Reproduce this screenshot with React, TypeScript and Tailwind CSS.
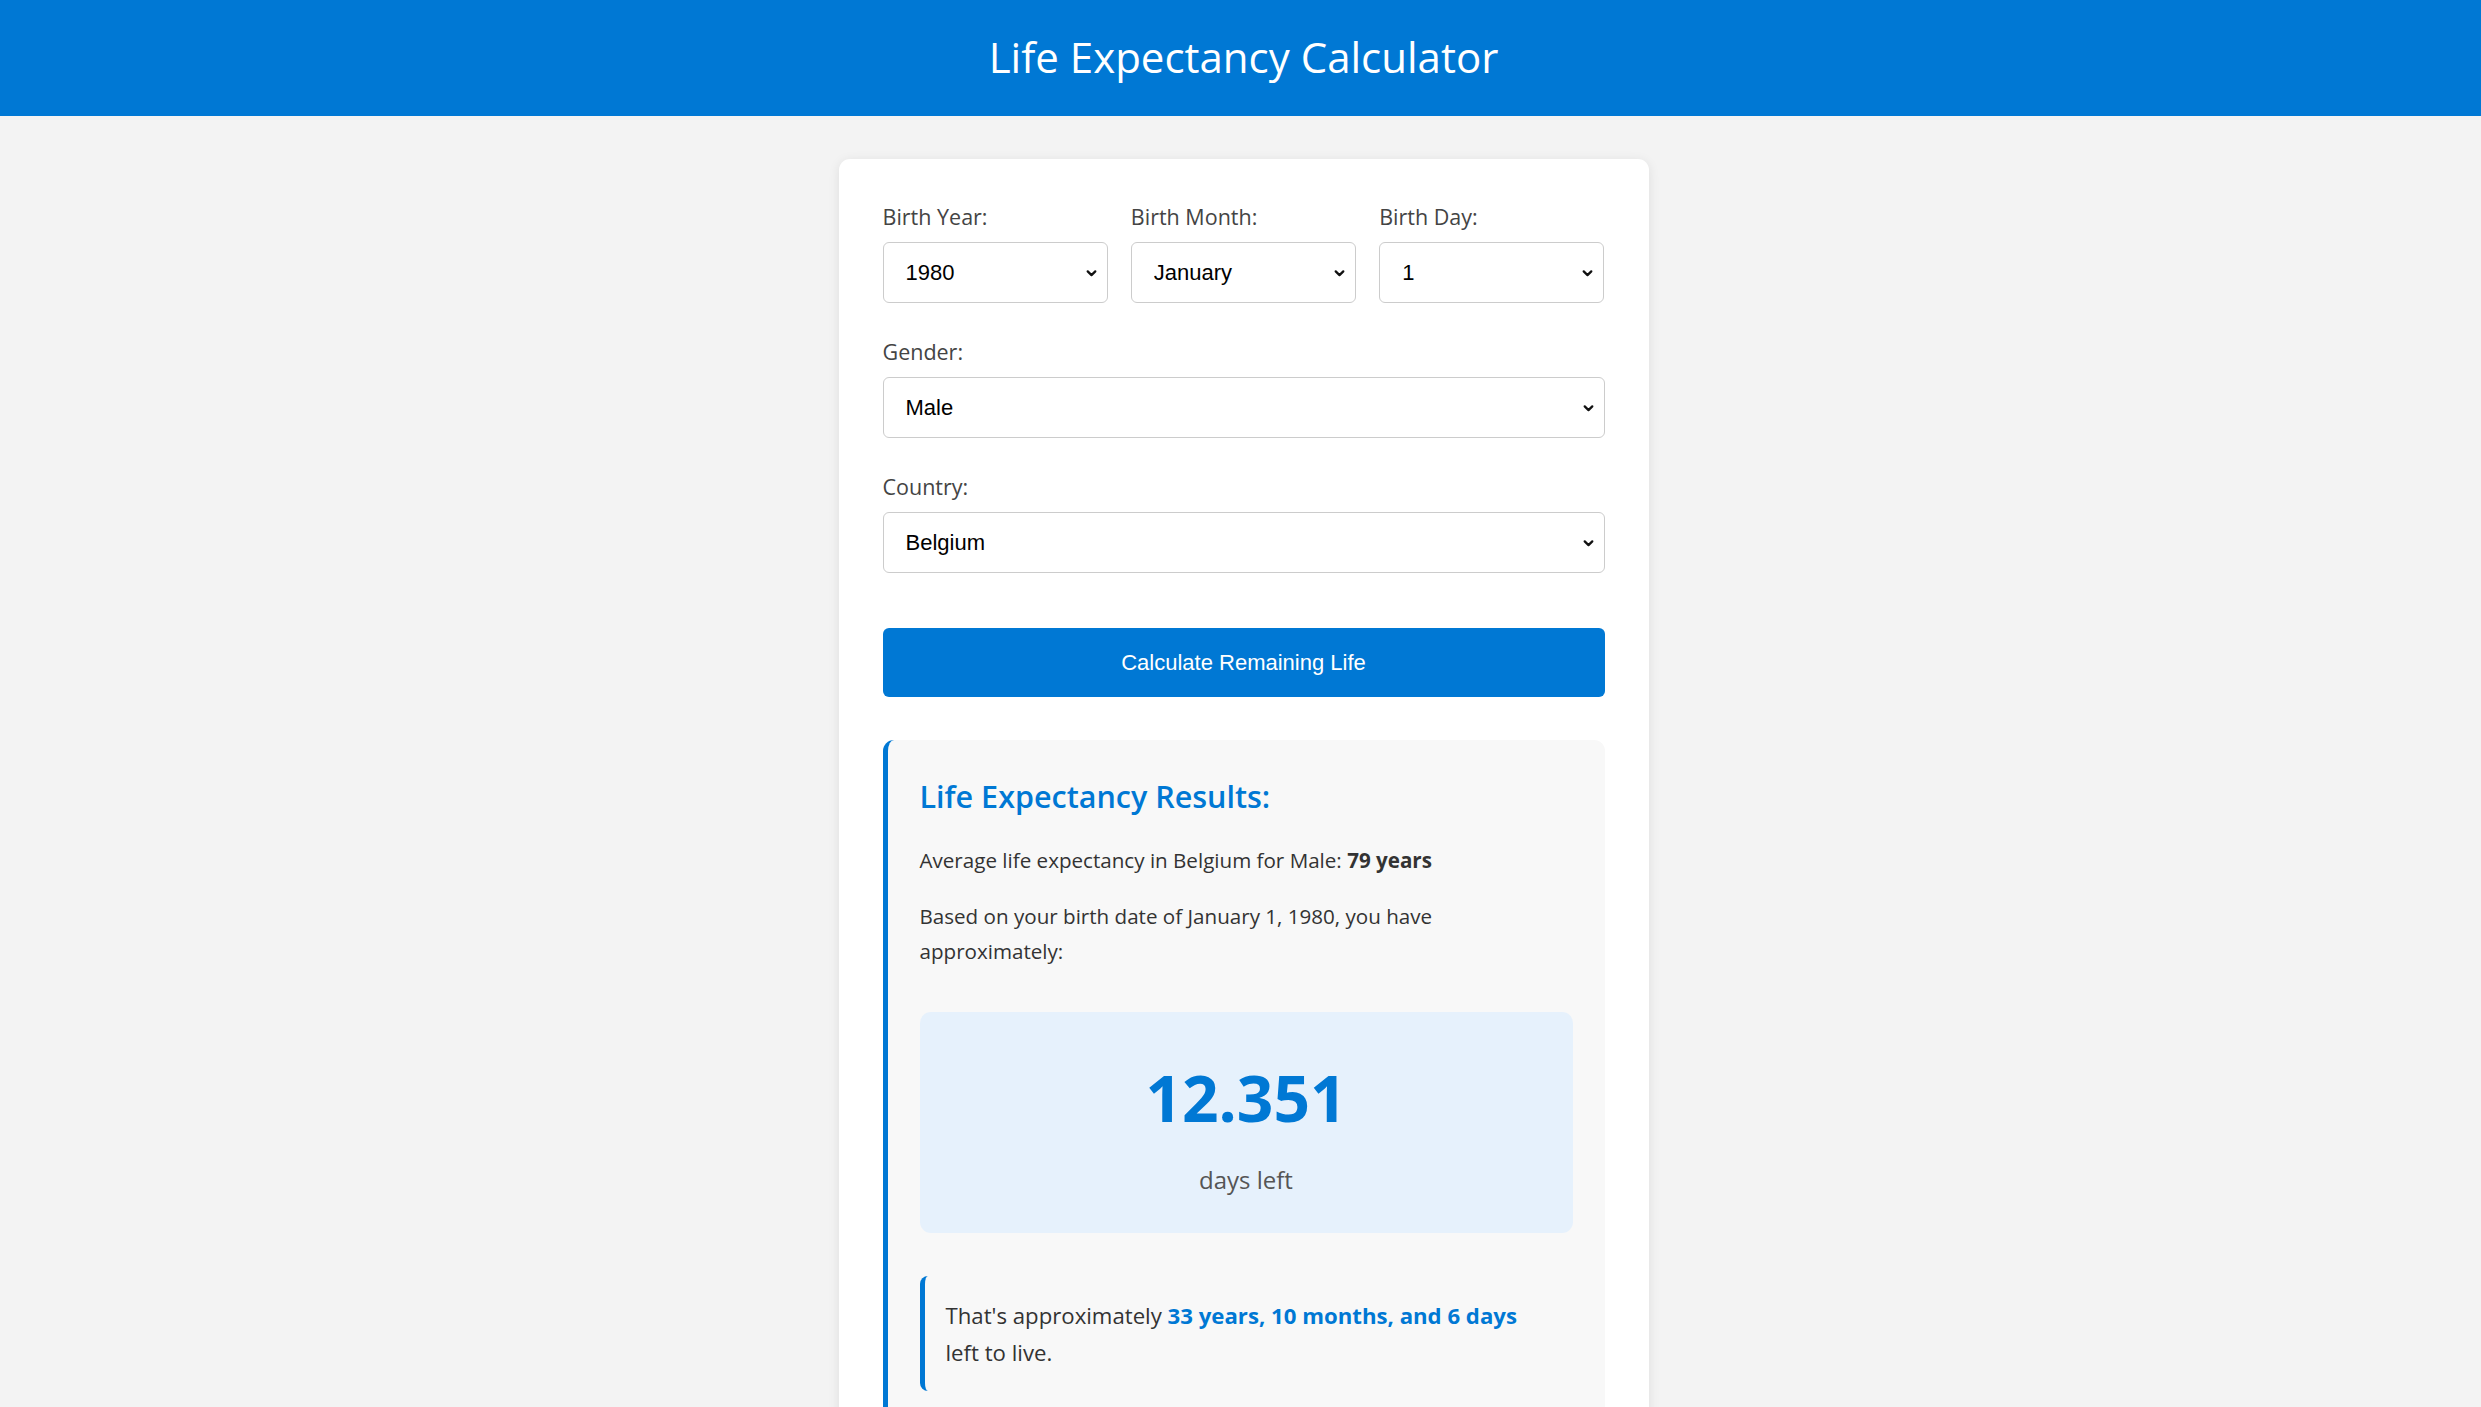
import { useState } from 'react';

const YEARS = Array.from({ length: 100 }, (_, i) => 2024 - i);
const MONTHS = [
  'January', 'February', 'March', 'April', 'May', 'June',
  'July', 'August', 'September', 'October', 'November', 'December',
];
const DAYS = Array.from({ length: 31 }, (_, i) => i + 1);

function Chevron() {
  return (
    <svg
      className="pointer-events-none absolute right-[10px] top-1/2 -translate-y-1/2 w-[13px] h-[13px]"
      viewBox="0 0 12 12"
      fill="none"
      stroke="#111"
      strokeWidth={2.1}
    >
      <path d="M2.5 4.5 6 8l3.5-3.5" strokeLinecap="round" strokeLinejoin="round" />
    </svg>
  );
}

function Field({
  label,
  value,
  options,
  onChange,
  className = '',
}: {
  label: string;
  value: string;
  options: string[];
  onChange: (v: string) => void;
  className?: string;
}) {
  return (
    <div className={className}>
      <label className="block text-[21.5px] leading-[30px] font-medium text-[#444] mb-[10px]">{label}</label>
      <div className="relative">
        <select
          value={value}
          onChange={(e) => onChange(e.target.value)}
          className="appearance-none w-full h-[61px] pl-[22px] pr-10 bg-white border border-[#ccc] rounded-[6px] text-[22px] text-black font-['Liberation_Sans',Arial,sans-serif] outline-none"
        >
          {options.map((o) => (
            <option key={o} value={o}>
              {o}
            </option>
          ))}
        </select>
        <Chevron />
      </div>
    </div>
  );
}

export default function App() {
  const [year, setYear] = useState('1980');
  const [month, setMonth] = useState('January');
  const [day, setDay] = useState('1');
  const [gender, setGender] = useState('Male');
  const [country, setCountry] = useState('Belgium');

  return (
    <div className="min-h-screen bg-[#f3f3f3] font-['Open_Sans','Noto_Sans',sans-serif] text-[#333]">
      {/* Header */}
      <header className="h-[116px] bg-[#0078d4] flex items-center justify-center pl-[6px]">
        <h1 className="text-[42px] font-normal text-white leading-none -mt-[3px]">Life Expectancy Calculator</h1>
      </header>

      <main className="flex justify-center pt-[43px] pb-[60px] pl-[6px]">
        <div className="w-[810px] bg-white rounded-[11px] shadow-[0_2px_12px_rgba(0,0,0,0.09)] px-[44px] pt-[43px] pb-[44px]">
          {/* Birth date row */}
          <div className="grid grid-cols-3 gap-[23px] mb-[34px]">
            <Field label="Birth Year:" value={year} options={YEARS.map(String)} onChange={setYear} />
            <Field label="Birth Month:" value={month} options={MONTHS} onChange={setMonth} />
            <Field label="Birth Day:" value={day} options={DAYS.map(String)} onChange={setDay} />
          </div>

          <Field
            className="mb-[34px]"
            label="Gender:"
            value={gender}
            options={['Male', 'Female']}
            onChange={setGender}
          />
          <Field
            label="Country:"
            value={country}
            options={['Belgium', 'Netherlands', 'France', 'Germany', 'United Kingdom']}
            onChange={setCountry}
          />

          <button className="mt-[55px] w-full h-[69px] bg-[#0078d4] text-white rounded-[6px] text-[22px] font-['Liberation_Sans',Arial,sans-serif]">
            Calculate Remaining Life
          </button>

          {/* Results */}
          <div className="mt-[43px] bg-[#f8f8f8] border-l-[5px] border-[#0078d4] rounded-[11px] pl-[32px] pr-[32px] pt-[36px] pb-[40px]">
            <h3 className="text-[30.5px] leading-[40px] font-semibold text-[#0078d4] mb-[27px]">Life Expectancy Results:</h3>
            <p className="text-[20.6px] leading-[35px] mb-[21px]">
              Average life expectancy in Belgium for Male: <strong className="font-bold">79 years</strong>
            </p>
            <p className="text-[20.6px] leading-[35px] pr-[90px]">
              Based on your birth date of January 1, 1980, you have approximately:
            </p>

            <div className="mt-[43px] bg-[#e6f1fc] rounded-[11px] pt-[54px] pb-[37px] flex flex-col items-center">
              <div className="text-[64px] leading-[64px] font-bold text-[#0078d4]">12.351</div>
              <div className="mt-[34px] text-[24px] leading-[32px] text-[#555]">days left</div>
            </div>

            <div className="mt-[43px] border-l-[5px] border-[#0078d4] rounded-[8px] pl-[21px] pt-[21px] pb-[20px] pr-[50px]">
              <p className="text-[22.2px] leading-[37px]">
                That's approximately{' '}
                <strong className="font-bold text-[#0078d4]">33 years, 10 months, and 6 days</strong> left to live.
              </p>
            </div>
          </div>
        </div>
      </main>
    </div>
  );
}
